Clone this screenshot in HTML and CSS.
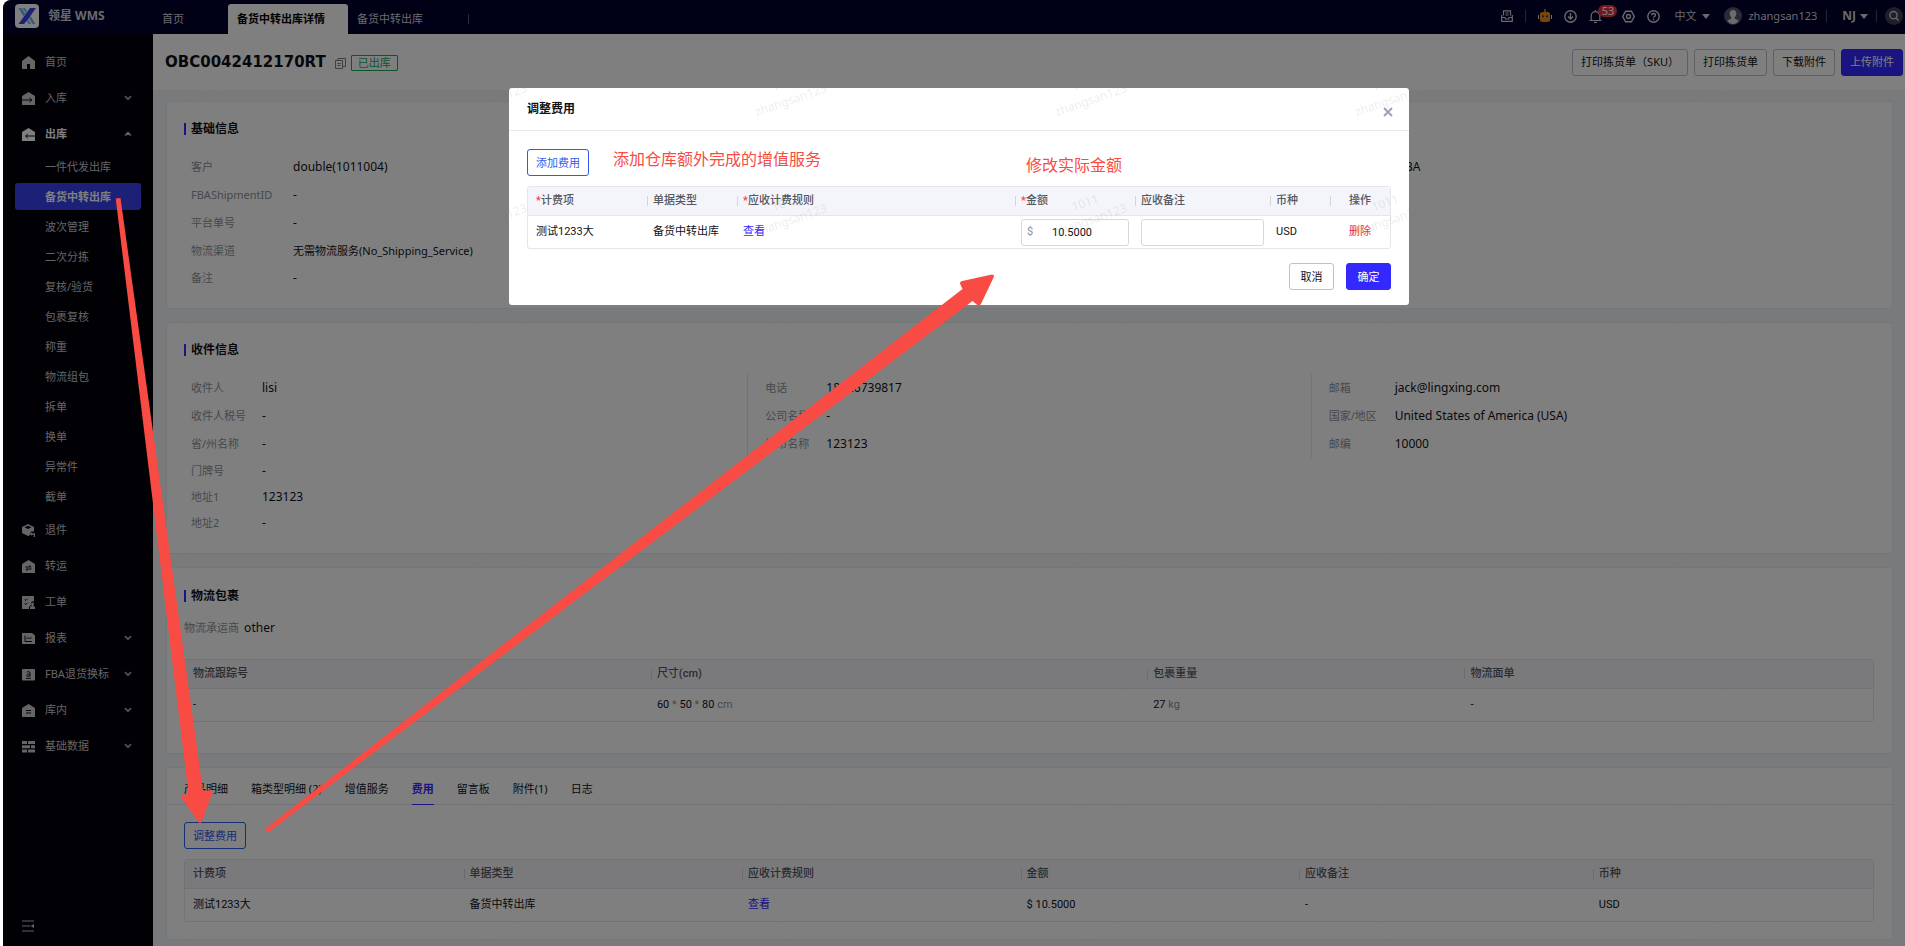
FILE: index.html
```html
<!DOCTYPE html>
<html lang="zh-CN">
<head>
    <meta charset="UTF-8">
    <title>领星 WMS - 备货中转出库详情</title>
    <link rel="stylesheet" href="styles.css">
</head>
<body>
    <svg class="sprite" aria-hidden="true">
        <symbol id="i-down" viewBox="0 0 8 6"><path d="M1 1.2l3 3 3-3" fill="none" stroke="currentColor" stroke-width="1.8"/></symbol>
        <symbol id="i-up" viewBox="0 0 8 6"><path d="M4 0.4L7.8 4.6H5.4L4 3.6 2.6 4.6H.2z" fill="currentColor"/></symbol>
        <symbol id="i-caret" viewBox="0 0 8 5"><path d="M0 0h8L4 5z" fill="currentColor"/></symbol>
    </svg>

    <div class="app">
        <header class="topbar">
            <div class="brand">
                <svg class="logo" viewBox="0 0 24 24">
                    <rect width="24" height="24" rx="4" fill="#fff"/>
                    <path d="M15 4h6l-8.500 12-3.500 4H3.500z" fill="#3a40e8"/>
                    <path d="M3.500 4h3l4 6-2 2.500z" fill="#6db4f5"/>
                    <path d="M7.500 4h2.500l2 3.500-1 1.500z" fill="#6db4f5"/>
                    <path d="M14 14l1.500-2L20.500 20h-3z" fill="#6db4f5"/>
                    <path d="M12 17l1.200-1.700L16 20h-2.500z" fill="#6db4f5"/>
                </svg>
                <span>领星 WMS</span>
            </div>
            <nav class="page-tabs">
                <a href="#" class="page-tab home">首页</a>
                <a href="#" class="page-tab active">备货中转出库详情</a>
                <a href="#" class="page-tab last">备货中转出库</a>
            </nav>
            <div class="tools">
                <button class="tool" aria-label="收件箱">
                    <svg width="12" height="12" viewBox="0 0 12 12" fill="none" stroke="currentColor" stroke-width="1.200"><path d="M2.500 5.500V.8h7v4.700M.7 5v6.300h10.600V5M.8 7.500h3l.8 1.500h2.800l.8-1.500h3M4.500 3h3M4.500 5h3"/></svg>
                </button>
                <i class="sep"></i>
                <button class="tool robot" aria-label="助手">
                    <svg width="14" height="14" viewBox="0 0 14 14"><path d="M6.300 0h1.400v3H6.300z" fill="#f28a1a"/><rect x="2" y="3" width="10" height="10" rx="2.500" fill="#f28a1a"/><path d="M0 6h1v4H0zM13 6h1v4h-1z" fill="#ddd"/><circle cx="5" cy="7.200" r="1" fill="#332"/><circle cx="9" cy="7.200" r="1" fill="#332"/></svg>
                </button>
                <button class="tool" aria-label="下载">
                    <svg width="13" height="13" viewBox="0 0 13 13" fill="none" stroke="currentColor" stroke-width="1.400"><circle cx="6.500" cy="6.500" r="5.700"/><path d="M6.500 3v5.500M4 6.500L6.500 9 9 6.500"/></svg>
                </button>
                <button class="tool bell" aria-label="消息">
                    <svg width="13" height="13" viewBox="0 0 13 13" fill="none" stroke="currentColor" stroke-width="1.200"><path d="M.5 10.500h12M2.200 10.500V6a4.300 4.300 0 0 1 8.600 0v4.500M6.500 0v2M5 12.300h3"/></svg>
                    <span class="badge">53</span>
                </button>
                <button class="tool" aria-label="设置">
                    <svg width="13" height="13" viewBox="0 0 13 13" fill="none" stroke="currentColor" stroke-width="1.400"><path d="M3.600 1.200h5.800l2.900 5.300-2.900 5.300H3.600L.7 6.500z"/><circle cx="6.500" cy="6.500" r="2"/></svg>
                </button>
                <button class="tool" aria-label="帮助">
                    <svg width="13" height="13" viewBox="0 0 13 13" fill="none" stroke="currentColor" stroke-width="1.400"><circle cx="6.500" cy="6.500" r="5.700"/><path d="M4.700 5.200c0-2.300 3.700-2.300 3.700 0 0 1.300-1.900 1.300-1.900 2.600M6.500 8.800v1.400"/></svg>
                </button>
                <button class="tool lang">中文 <svg width="8" height="5"><use href="#i-caret"/></svg></button>
                <button class="tool user">
                    <svg width="18" height="18" viewBox="0 0 18 18"><circle cx="9" cy="9" r="9" fill="#55586a"/><path d="M9 3c2.500 0 3.600 1.700 3.300 4-.2 1.600-.9 2.800-1.600 3.400v1.200l3.800 1.800C13.300 15.700 11.300 17 9 17s-4.300-1.300-5.500-3.600l3.800-1.800v-1.200C6.600 9.800 5.900 8.600 5.700 7 5.400 4.700 6.500 3 9 3z" fill="#d8d8dc"/></svg>
                    zhangsan123
                </button>
                <i class="sep"></i>
                <button class="tool site">NJ <svg width="8" height="5"><use href="#i-caret"/></svg></button>
                <i class="sep"></i>
                <button class="tool search" aria-label="搜索">
                    <svg width="18" height="18" viewBox="0 0 18 18"><circle cx="9" cy="9" r="9" fill="#3c3f50"/><circle cx="8.500" cy="8.200" r="3.600" fill="none" stroke="#c8c8cc" stroke-width="1.500"/><path d="M11 11l2.600 2.600" stroke="#c8c8cc" stroke-width="1.500"/></svg>
                </button>
            </div>
        </header>

        <div class="layout">
            <aside class="sidebar">
                <nav>
                    <a href="#" class="menu-item">
                        <svg viewBox="0 0 13 13"><path d="M0 5L6.500 0 13 5v8H8V8H5v5H0z" fill="currentColor"/></svg>首页
                    </a>
                    <a href="#" class="menu-item">
                        <svg viewBox="0 0 13 13"><path d="M0 4L6.500 0 13 4v9H0z" fill="currentColor"/><path d="M0 8h9M7.500 6L10 8 7.500 10" stroke="#0a0a16" fill="none"/></svg>入库
                        <svg class="arrow"><use href="#i-down"/></svg>
                    </a>
                    <a href="#" class="menu-item open">
                        <svg viewBox="0 0 13 13"><path d="M0 4L6.500 0 13 4v9H0z" fill="currentColor"/><path d="M13 8H4M5.800 6L3.500 8l2.300 2" stroke="#0a0a16" fill="none"/></svg>出库
                        <svg class="arrow"><use href="#i-up"/></svg>
                    </a>
                    <div class="submenu">
                        <a href="#">一件代发出库</a>
                        <a href="#" class="current">备货中转出库</a>
                        <a href="#">波次管理</a>
                        <a href="#">二次分拣</a>
                        <a href="#">复核/验货</a>
                        <a href="#">包裹复核</a>
                        <a href="#">称重</a>
                        <a href="#">物流组包</a>
                        <a href="#">拆单</a>
                        <a href="#">换单</a>
                        <a href="#">异常件</a>
                        <a href="#">截单</a>
                    </div>
                    <a href="#" class="menu-item">
                        <svg viewBox="0 0 13 13"><path d="M6 0l6 3v4.500H9L8 11l-2 1-6-3V3z" fill="currentColor"/><path d="M2.500 3.300L6 5l3.500-1.700L6 1.800z" fill="#0a0a16"/><path d="M8 10l2-1.700v1h3V13h-1.300v-2.200H10v1z" fill="currentColor"/></svg>退件
                    </a>
                    <a href="#" class="menu-item">
                        <svg viewBox="0 0 13 13"><path d="M0 4L6.500 0 13 4v9H0z" fill="currentColor"/><path d="M3.500 7h5.500L7.500 5.200M9.500 9H4l1.500 1.800" stroke="#0a0a16" fill="none"/></svg>转运
                    </a>
                    <a href="#" class="menu-item">
                        <svg viewBox="0 0 13 13"><path d="M0 0h12v5.500a2.500 2.500 0 0 0-3 3.500l-2 2v2H0z" fill="currentColor"/><path d="M2.500 3.500l1.200 1 1.700-1.800M2.500 7.500l1.200 1 1.700-1.800" stroke="#0a0a16" fill="none"/><path d="M10.500 6.500a1.500 1.500 0 0 1 1 2.600V10.500H13V13H8v-2.500h1.500V9.100a1.500 1.500 0 0 1 1-2.600z" fill="currentColor"/></svg>工单
                    </a>
                    <a href="#" class="menu-item">
                        <svg viewBox="0 0 13 13"><path d="M0 1h10l3 2.500V12H0z" fill="currentColor"/><path d="M3 3.500V9.500h7M4.500 6.500l1.500-1 1.500 1.500 2-2" stroke="#0a0a16" fill="none"/></svg>报表
                        <svg class="arrow"><use href="#i-down"/></svg>
                    </a>
                    <a href="#" class="menu-item">
                        <svg viewBox="0 0 13 13"><rect y="1" width="13" height="11.500" rx="1" fill="currentColor"/><path d="M4.700 4.500c.8-1.300 3.300-1.200 3.300.5v3.500M8 6C6 6 4.800 6.300 4.800 7.400 4.800 8.800 7.200 8.700 8 7M4 10.300h5" stroke="#0a0a16" fill="none"/></svg>FBA退货换标
                        <svg class="arrow"><use href="#i-down"/></svg>
                    </a>
                    <a href="#" class="menu-item">
                        <svg viewBox="0 0 13 13"><path d="M0 4L6.500 0 13 4v9H0z" fill="currentColor"/><path d="M4 6.500h5M4 9h5" stroke="#0a0a16" fill="none"/></svg>库内
                        <svg class="arrow"><use href="#i-down"/></svg>
                    </a>
                    <a href="#" class="menu-item">
                        <svg viewBox="0 0 13 13"><path d="M0 1h5v3H0zM6 1h7v3H6zM0 5.200h8v3H0zM9 5.200h4v3H9zM0 9.400h5v3H0zM6 9.400h7v3H6z" fill="currentColor"/></svg>基础数据
                        <svg class="arrow"><use href="#i-down"/></svg>
                    </a>
                </nav>
                <button class="collapse" aria-label="收起菜单">
                    <svg width="13" height="12" viewBox="0 0 13 12"><path d="M0 1h12M0 6h8M0 11h12" stroke="currentColor" stroke-width="1.200"/><path d="M12 4v4L8.500 6z" fill="currentColor"/></svg>
                </button>
            </aside>

            <main class="main">
                <div class="page-head">
                    <h1>OBC0042412170RT</h1>
                    <svg class="copy" width="11" height="11" viewBox="0 0 11 11" fill="none" stroke="currentColor"><path d="M.5 2.500h7v8h-7zM3 2.500v-2h7.500v8h-3M2.300 5.500h3.400M2.300 7.500h3.400"/></svg>
                    <span class="tag">已出库</span>
                    <div class="actions">
                        <button class="btn">打印拣货单（SKU）</button>
                        <button class="btn">打印拣货单</button>
                        <button class="btn">下载附件</button>
                        <button class="btn primary">上传附件</button>
                    </div>
                </div>

                <div class="content">
                    <section class="card">
                        <h2>基础信息</h2>
                        <div class="columns base">
                            <dl>
                                <div><dt>客户</dt><dd>double(1011004)</dd></div>
                                <div><dt>FBAShipmentID</dt><dd>-</dd></div>
                                <div><dt>平台单号</dt><dd>-</dd></div>
                                <div><dt>物流渠道</dt><dd class="mixed">无需物流服务(No_Shipping_Service)</dd></div>
                                <div class="tight"><dt>备注</dt><dd>-</dd></div>
                            </dl>
                            <dl></dl>
                            <dl>
                                <div><dt>类型</dt><dd>FBA</dd></div>
                            </dl>
                        </div>
                    </section>

                    <section class="card">
                        <h2>收件信息</h2>
                        <div class="columns">
                            <dl>
                                <div><dt>收件人</dt><dd>lisi</dd></div>
                                <div><dt>收件人税号</dt><dd>-</dd></div>
                                <div><dt>省/州名称</dt><dd>-</dd></div>
                                <div class="tight"><dt>门牌号</dt><dd>-</dd></div>
                                <div class="tight"><dt>地址1</dt><dd>123123</dd></div>
                                <div class="tight"><dt>地址2</dt><dd>-</dd></div>
                            </dl>
                            <dl>
                                <div><dt>电话</dt><dd>18826739817</dd></div>
                                <div><dt>公司名称</dt><dd>-</dd></div>
                                <div><dt>城市名称</dt><dd>123123</dd></div>
                            </dl>
                            <dl>
                                <div><dt>邮箱</dt><dd>jack@lingxing.com</dd></div>
                                <div><dt>国家/地区</dt><dd>United States of America (USA)</dd></div>
                                <div><dt>邮编</dt><dd>10000</dd></div>
                            </dl>
                        </div>
                    </section>

                    <section class="card package">
                        <h2>物流包裹</h2>
                        <p class="carrier"><span>物流承运商</span> other</p>
                        <table class="grid">
                            <colgroup><col class="p1"><col class="p2"><col class="p3"><col></colgroup>
                            <thead>
                                <tr><th>物流跟踪号</th><th>尺寸(cm)</th><th>包裹重量</th><th>物流面单</th></tr>
                            </thead>
                            <tbody>
                                <tr>
                                    <td>-</td>
                                    <td>60 <em>*</em> 50 <em>*</em> 80 <em>cm</em></td>
                                    <td>27 <em>kg</em></td>
                                    <td>-</td>
                                </tr>
                            </tbody>
                        </table>
                    </section>

                    <section class="card detail">
                        <div class="tabs">
                            <button>产品明细</button>
                            <button>箱类型明细 (2)</button>
                            <button>增值服务</button>
                            <button class="active">费用</button>
                            <button>留言板</button>
                            <button>附件(1)</button>
                            <button>日志</button>
                        </div>
                        <div class="tab-body">
                            <button class="btn outline">调整费用</button>
                            <table class="grid">
                                <colgroup><col class="f1"><col class="f1"><col class="f1"><col class="f1"><col class="f2"><col></colgroup>
                                <thead>
                                    <tr><th>计费项</th><th>单据类型</th><th>应收计费规则</th><th>金额</th><th>应收备注</th><th>币种</th></tr>
                                </thead>
                                <tbody>
                                    <tr>
                                        <td>测试1233大</td>
                                        <td>备货中转出库</td>
                                        <td><a href="#">查看</a></td>
                                        <td>$ 10.5000</td>
                                        <td>-</td>
                                        <td>USD</td>
                                    </tr>
                                </tbody>
                            </table>
                        </div>
                    </section>
                </div>
            </main>
        </div>

        <div class="mask">
            <div class="modal" role="dialog" aria-labelledby="modal-title">
                <div class="modal-head">
                    <h2 id="modal-title">调整费用</h2>
                    <button class="close" aria-label="关闭">
                        <svg width="10" height="10" viewBox="0 0 10 10"><path d="M1 1l8 8M9 1L1 9" stroke="currentColor" stroke-width="1.800"/></svg>
                    </button>
                </div>
                <div class="modal-body">
                    <button class="btn outline">添加费用</button>
                    <span class="note note-add">添加仓库额外完成的增值服务</span>
                    <span class="note note-amount">修改实际金额</span>
                    <table class="grid">
                        <colgroup><col class="m1"><col class="m2"><col><col class="m4"><col class="m5"><col class="m6"><col class="m6"></colgroup>
                        <thead>
                            <tr>
                                <th class="required">计费项</th>
                                <th>单据类型</th>
                                <th class="required">应收计费规则</th>
                                <th class="required">金额</th>
                                <th>应收备注</th>
                                <th>币种</th>
                                <th class="op">操作</th>
                            </tr>
                        </thead>
                        <tbody>
                            <tr>
                                <td>测试1233大</td>
                                <td>备货中转出库</td>
                                <td><a href="#">查看</a></td>
                                <td><label class="field money"><span>$</span><input type="text" value="10.5000" aria-label="金额"></label></td>
                                <td><label class="field"><input type="text" aria-label="应收备注"></label></td>
                                <td>USD</td>
                                <td class="op"><a href="#" class="danger">删除</a></td>
                            </tr>
                        </tbody>
                    </table>
                </div>
                <div class="modal-foot">
                    <button class="btn">取消</button>
                    <button class="btn primary">确定</button>
                </div>
            </div>
        </div>
    </div>

    <svg class="watermark" aria-hidden="true">
        <defs>
            <pattern id="wm" x="41" y="40" width="300" height="120" patternUnits="userSpaceOnUse">
                <g transform="rotate(-19 150 60)">
                    <text x="150" y="46" text-anchor="middle">1011</text>
                    <text x="150" y="64" text-anchor="middle">zhangsan123</text>
                </g>
            </pattern>
        </defs>
        <rect width="100%" height="100%" fill="url(#wm)"/>
    </svg>

    <svg class="arrows" width="1000" height="850" aria-hidden="true">
        <path d="M115.700 198.500L120.500 198 203 791l8-1q2.500 0 1.500 2.500L201.500 822q-1.500 2-3 0L181 797q-.5-2 2-2.200l5.500-.8z"/>
        <path d="M265.500 828.500L962.500 289l-2.300-5q-.8-2.500 2-3L992 274.500q2.500 0 1.800 2.500L981 304q-1.500 2.500-4 .8L972.500 301 269 831.700q-3 1-3.500-3.200z"/>
    </svg>
</body>
</html>
```
FILE: styles.css
```css
* {
    box-sizing: border-box;
    margin: 0;
    padding: 0;
}

body {
    font-family: "Noto Sans", "Noto Sans CJK SC", sans-serif;
    font-size: 11px;
    line-height: 16px;
    color: #111118;
    background: #fff;
    overflow: hidden;
}

a {
    color: inherit;
    text-decoration: none;
}

button,
input {
    font: inherit;
    color: inherit;
}

.sprite {
    display: none;
}

.app {
    position: relative;
    display: flex;
    flex-direction: column;
    min-height: 100vh;
    margin-left: 3px;
    border-radius: 8px 0 0 0;
    overflow: hidden;
}

/* top bar */
.topbar {
    display: flex;
    height: 34px;
    background: #00002c;
    color: #d4d4da;
}

.brand {
    display: flex;
    align-items: center;
    gap: 9px;
    width: 150px;
    padding: 0 0 2px 12px;
    font-size: 12px;
    font-weight: bold;
}

.logo {
    width: 24px;
    height: 24px;
}

.page-tabs {
    display: flex;
    align-items: flex-end;
}

.page-tab {
    height: 30px;
    line-height: 30px;
    padding: 0 9px;
}

.page-tab.home {
    width: 75px;
}

.page-tab.active {
    width: 120px;
    background: #fff;
    border-radius: 3px 3px 0 0;
    color: #000;
    font-weight: bold;
    white-space: nowrap;
}

.page-tab.last {
    width: 121px;
    background: linear-gradient(#55556a, #55556a) no-repeat 100% 50% / 1px 10px;
}

.tools {
    display: flex;
    align-items: center;
    gap: 12px;
    margin-left: auto;
    padding: 0 2px 2px 0;
}

.tool {
    display: flex;
    align-items: center;
    gap: 6px;
    background: none;
    border: none;
    color: inherit;
    cursor: pointer;
}

.sep {
    width: 1px;
    height: 12px;
    background: #4a4a60;
}

.bell {
    position: relative;
    margin-right: 8px;
}

.badge {
    position: absolute;
    left: 9px;
    top: -5px;
    width: 19px;
    height: 12px;
    border-radius: 6px;
    background: #e5343d;
    color: #fff;
    line-height: 12px;
    text-align: center;
}

.lang {
    margin: 0 2px;
}

.user {
    margin-right: -3px;
}

.site {
    gap: 4px;
    margin: 0 -4px 0 3px;
    font-size: 12px;
    font-weight: bold;
}

.search {
    margin-left: -4px;
}

/* sidebar */
.layout {
    display: flex;
    flex: 1;
}

.sidebar {
    display: flex;
    flex-direction: column;
    justify-content: space-between;
    width: 150px;
    padding: 10px 12px 14px;
    background: #00000a;
    color: #cacacd;
}

.menu-item {
    display: flex;
    align-items: center;
    height: 36px;
    padding: 0 9px 0 7px;
}

.menu-item svg {
    width: 13px;
    height: 13px;
    margin-right: 10px;
}

.menu-item .arrow {
    width: 8px;
    height: 6px;
    margin: 0 0 0 auto;
    color: #a0a0a6;
}

.menu-item.open {
    color: #fff;
    font-weight: bold;
}

.menu-item.open .arrow {
    color: #d8d8dc;
}

.submenu a {
    display: block;
    height: 27px;
    margin-bottom: 3px;
    padding-left: 30px;
    border-radius: 3px;
    line-height: 27px;
}

.submenu {
    padding-top: 1px;
}

.submenu a:last-child {
    margin-bottom: 2px;
}

.submenu .current {
    background: #3840ee;
    color: #fff;
    font-weight: bold;
}

.collapse {
    display: flex;
    width: 13px;
    margin-left: 7px;
    background: none;
    border: none;
    cursor: pointer;
}

/* page */
.main {
    flex: 1;
    min-width: 0;
    background: #f2f4f8;
}

.page-head {
    display: flex;
    align-items: center;
    height: 56px;
    padding: 0 2px 0 12px;
    background: #fff;
}

.page-head h1 {
    font-family: "DejaVu Sans", "Noto Sans CJK SC", sans-serif;
    font-size: 15px;
    line-height: 20px;
}

.copy {
    margin: 2px 5px 0 9px;
    color: #808088;
}

.tag {
    height: 16px;
    margin-top: 2px;
    padding: 0 6px;
    border: 1px solid #1fa85a;
    border-radius: 1px;
    color: #1fa85a;
    line-height: 14px;
}

.actions {
    display: flex;
    gap: 6px;
    margin-left: auto;
}

.btn {
    height: 27px;
    padding: 0 8px;
    background: #fff;
    border: 1px solid #bfc1c8;
    border-radius: 3px;
    line-height: 16px;
    white-space: nowrap;
    cursor: pointer;
}

.btn.primary {
    background: #3329ff;
    border-color: #3329ff;
    color: #fff;
}

.btn.outline {
    border-color: #2f5bea;
    color: #2f5bea;
}

.content {
    display: flex;
    flex-direction: column;
    gap: 13px;
    padding: 11px 12px 6px 13px;
}

.card {
    padding: 19px 18px 17px 17px;
    background: #fff;
    border: 1px solid #ebecf0;
    border-radius: 3px;
}

.card h2 {
    margin-bottom: 16px;
    padding-left: 7px;
    background: linear-gradient(#3329ff, #3329ff) no-repeat 0 50% / 2px 12px;
    font-size: 12px;
    line-height: 16px;
}

.columns {
    display: grid;
    grid-template-columns: repeat(3, 1fr);
    align-items: start;
}

.columns dl {
    padding-left: 17px;
    border-left: 1px solid #e4e6ec;
}

.columns dl:first-child {
    padding-left: 6px;
    border-color: transparent;
}

.columns dl > div {
    display: flex;
    align-items: center;
    height: 28px;
}

.columns dl > .tight {
    height: 26px;
}

.columns dt {
    width: 61px;
    color: #8e9199;
}

.columns dl:first-child dt {
    width: 71px;
}

.columns dl:last-child dt {
    width: 66px;
}

.columns.base dl:first-child dt {
    width: 102px;
}

.columns.base dl:last-child dt {
    width: 70px;
}

.columns dd {
    font-size: 12px;
}

.columns dd.mixed {
    font-size: 11px;
}

.package {
    padding-top: 20px;
    padding-bottom: 31px;
}

.carrier {
    margin-bottom: 23px;
    font-size: 12px;
}

.carrier span {
    margin-right: 2px;
    font-size: 11px;
    color: #8e9199;
}

/* tables */
.grid {
    width: 100%;
    border: 1px solid #e4e6ec;
    border-radius: 3px;
    border-spacing: 0;
    table-layout: fixed;
    font-family: Roboto, "Noto Sans CJK SC", sans-serif;
}

.grid th {
    height: 29px;
    padding: 0 6px;
    background: #f4f5fa;
    border-bottom: 1px solid #e4e6ec;
    color: #55575e;
    font-weight: 500;
    text-align: left;
}

.grid th + th {
    background: #f4f5fa linear-gradient(#d4d6dc, #d4d6dc) no-repeat 0 50% / 1px 10px;
}

.grid td {
    height: 32px;
    padding: 0 6px;
}

.grid th:first-child,
.grid td:first-child {
    padding-left: 8px;
}

.grid em {
    color: #8e9199;
    font-style: normal;
}

.grid a {
    color: #3329ff;
}

.grid .p1 { width: 27.6%; }
.grid .p2 { width: 29.4%; }
.grid .p3 { width: 18.8%; }

.grid .f1 { width: 16.5%; }
.grid .f2 { width: 17.4%; }

.detail {
    padding: 0;
}

.tabs {
    display: flex;
    gap: 23px;
    padding: 5px 17px 0;
    border-bottom: 1px solid #e4e6ec;
}

.tabs button {
    height: 32px;
    margin-bottom: -1px;
    background: none;
    border: none;
    border-bottom: 1px solid transparent;
    cursor: pointer;
}

.tabs .active {
    border-color: #3329ff;
    color: #3329ff;
    font-weight: bold;
}

.tab-body {
    padding: 17px 18px 17px 17px;
}

.tab-body .grid {
    margin-top: 10px;
}

/* fee dialog */
.mask {
    position: absolute;
    inset: 0;
    display: flex;
    align-items: flex-start;
    justify-content: center;
    padding: 88px 0 0 10px;
    background: rgba(0, 0, 0, 0.5);
}

.modal {
    width: 900px;
    background: #fff;
    border-radius: 3px;
}

.modal-head {
    display: flex;
    justify-content: space-between;
    padding: 13px 16px 13px 18px;
    border-bottom: 1px solid #e8e9ee;
}

.modal-head h2 {
    font-size: 12px;
    line-height: 16px;
}

.close {
    display: flex;
    align-items: flex-end;
    background: none;
    border: none;
    color: #96a0b0;
    cursor: pointer;
}

.modal-body {
    position: relative;
    padding: 18px 18px 0;
}

.modal-body .grid {
    margin-top: 10px;
}

.note {
    position: absolute;
    color: #f74b43;
    font-size: 16px;
    line-height: 20px;
}

.note-add {
    left: 104px;
    top: 18px;
}

.note-amount {
    left: 517px;
    top: 24px;
}

.required::before {
    content: "*";
    color: #f0424c;
}

.grid .m1 { width: 119px; }
.grid .m2 { width: 90px; }
.grid .m4 { width: 120px; }
.grid .m5 { width: 135px; }
.grid .m6 { width: 60px; }

.grid .op {
    text-align: center;
}

.grid .danger {
    color: #e5343d;
}

.field {
    display: flex;
    align-items: center;
    height: 27px;
    border: 1px solid #d6d8de;
    border-radius: 3px;
    background: #fff;
}

.field span {
    width: 30px;
    padding-left: 5px;
    color: #8e9199;
}

.field input {
    flex: 1;
    min-width: 0;
    height: 24px;
    border: none;
    outline: none;
    background: none;
}

.modal-foot {
    display: flex;
    justify-content: flex-end;
    gap: 12px;
    padding: 14px 18px 15px;
}

.modal-foot .btn {
    width: 45px;
}

/* overlays */
.watermark,
.arrows {
    position: absolute;
    left: 0;
    top: 0;
    pointer-events: none;
}

.watermark {
    width: 100%;
    height: 100%;
}

.watermark text {
    fill: rgba(110, 110, 110, 0.12);
    font-size: 12px;
}

.arrows {
    fill: #f74b43;
}
```
